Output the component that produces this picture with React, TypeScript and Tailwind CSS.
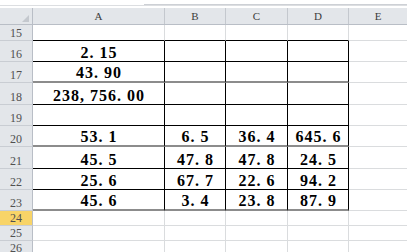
import React from "react";

type Line = "black" | "gray" | "grid";
type Row = { n: number; h: string; bottom: Line; side: Line; vals: string[] };

const rows: Row[] = [
  { n: 15, h: "h-[16px]", bottom: "black", side: "grid", vals: ["", "", "", ""] },
  { n: 16, h: "h-[21px]", bottom: "black", side: "black", vals: ["2. 15", "", "", ""] },
  { n: 17, h: "h-[21px]", bottom: "gray", side: "black", vals: ["43. 90", "", "", ""] },
  { n: 18, h: "h-[22px]", bottom: "black", side: "black", vals: ["238, 756. 00", "", "", ""] },
  { n: 19, h: "h-[21px]", bottom: "black", side: "black", vals: ["", "", "", ""] },
  { n: 20, h: "h-[21px]", bottom: "gray", side: "black", vals: ["53. 1", "6. 5", "36. 4", "645. 6"] },
  { n: 21, h: "h-[22px]", bottom: "black", side: "black", vals: ["45. 5", "47. 8", "47. 8", "24. 5"] },
  { n: 22, h: "h-[21px]", bottom: "black", side: "black", vals: ["25. 6", "67. 7", "22. 6", "94. 2"] },
  { n: 23, h: "h-[21px]", bottom: "gray", side: "black", vals: ["45. 6", "3. 4", "23. 8", "87. 9"] },
  { n: 24, h: "h-[15px]", bottom: "grid", side: "grid", vals: ["", "", "", ""] },
  { n: 25, h: "h-[15px]", bottom: "grid", side: "grid", vals: ["", "", "", ""] },
  { n: 26, h: "h-[15px]", bottom: "grid", side: "grid", vals: ["", "", "", ""] },
];

const widths = ["w-[132px]", "w-[61px]", "w-[62px]", "w-[61px]"];
const letters = ["A", "B", "C", "D"];

const bottomCls: Record<Line, string> = {
  black: "border-b border-b-black",
  gray: "border-b-2 border-b-[#8c8c8c]",
  grid: "border-b border-b-[#dadcde]",
};
const sideCls: Record<Line, string> = {
  black: "border-r border-r-black",
  gray: "border-r border-r-[#8c8c8c]",
  grid: "border-r border-r-[#dadcde]",
};

export default function App() {
  return (
    <div className="w-[407px] h-[252px] overflow-hidden bg-white [font-family:Liberation_Serif,serif]">
      {/* bottom edge of the formula bar */}
      <div className="h-[4px]" />
      <div className="flex h-px">
        <div className="w-[144px]" />
        <div className="flex-1 bg-[#cdd0d5]" />
      </div>
      <div className="h-px bg-[#dcdee1]" />
      <div className="h-[2px]" />

      <div className="flex h-[17px] bg-[#e3e6ea] border-b border-b-[#b9bec6] text-[11px] leading-none text-[#3c3c3c]">
        <div className="w-[33px] shrink-0 border-r border-r-[#b9bec6] relative">
          <svg className="absolute right-[3px] bottom-[2px]" width="7" height="7" viewBox="0 0 7 7">
            <polygon points="7,0 7,7 0,7" fill="#c4c8ce" />
          </svg>
        </div>
        {letters.map((l, i) => (
          <div
            key={l}
            className={`${widths[i]} shrink-0 border-r border-r-[#c4c8ce] flex items-end justify-center pb-[2px]`}
          >
            {l}
          </div>
        ))}
        <div className="flex-1 flex items-end justify-center pb-[2px]">E</div>
      </div>

      {rows.map((r) => (
        <div key={r.n} className={`flex ${r.h}`}>
          <div
            className={`w-[33px] shrink-0 border-r border-r-[#b9bec6] border-b border-b-[#c9cdd3] flex items-end justify-center pb-[1px] text-[12px] leading-none text-[#505050] ${
              r.n === 24 ? "bg-[#f8d468]" : "bg-[#e3e6ea]"
            }`}
          >
            {r.n}
          </div>
          {r.vals.map((v, i) => (
            <div
              key={i}
              className={`${widths[i]} shrink-0 ${sideCls[r.side]} ${bottomCls[r.bottom]} flex items-end justify-center pl-[1px] whitespace-pre text-[16px] leading-none font-bold tracking-[1px] text-black`}
            >
              {v}
            </div>
          ))}
          <div className="flex-1 border-b border-b-[#dadcde]" />
        </div>
      ))}
    </div>
  );
}
